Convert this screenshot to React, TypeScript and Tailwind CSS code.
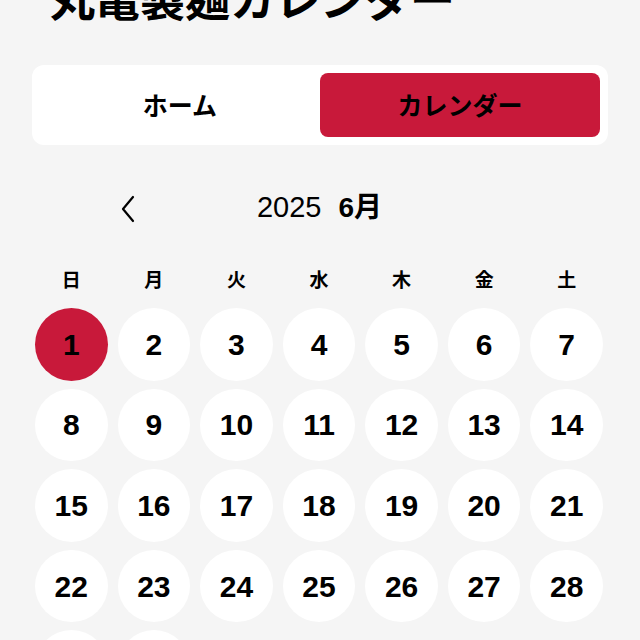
import React from "react";

const weekdays = ["日", "月", "火", "水", "木", "金", "土"];
const days = Array.from({ length: 30 }, (_, i) => i + 1);

export default function App() {
  return (
    <div
      className="h-[640px] overflow-hidden bg-[#f5f5f5] text-black"
      style={{ fontFamily: '"Liberation Sans", "Noto Sans CJK JP", sans-serif' }}
    >
      <h1 className="mt-[-21px] pl-[50px] text-[45px] leading-[45px] font-bold tracking-normal">
        丸亀製麺カレンダー
      </h1>
      <div className="mx-[32px] mt-[41px] flex h-[80px] rounded-[12px] bg-white p-[8px]">
        <button className="flex flex-1 items-center justify-center rounded-[8px] pt-[3px] text-[25px] font-bold">
          ホーム
        </button>
        <button className="flex flex-1 items-center justify-center rounded-[8px] bg-[#c8193a] pt-[3px] text-[25px] font-bold">
          カレンダー
        </button>
      </div>
      <div className="mx-auto mt-[44px] flex h-[42px] w-[400px] items-center justify-between">
        <svg width="18" height="30" viewBox="0 0 18 30" className="ml-[-1px] mt-[-3px]">
          <path d="M14 3 L4 15 L14 27" fill="none" stroke="#000" strokeWidth="2.2" strokeLinecap="round" strokeLinejoin="round" />
        </svg>
        <div className="mt-[-5px] flex items-baseline gap-[17px]">
          <span className="text-[29px]">2025</span>
          <span className="text-[28px] font-bold">6月</span>
        </div>
        <svg width="18" height="30" viewBox="0 0 18 30" className="invisible">
          <path d="M4 3 L14 15 L4 27" fill="none" stroke="#000" strokeWidth="2.2" />
        </svg>
      </div>
      <div className="ml-[35px] mt-[38px] grid w-[568px] grid-cols-7 gap-x-[10px]">
        {weekdays.map((w) => (
          <div key={w} className="flex h-[24px] items-center justify-center text-[19px] font-bold">
            {w}
          </div>
        ))}
      </div>
      <div className="ml-[35px] mt-[15px] grid w-[568px] grid-cols-7 gap-x-[10px] gap-y-[8px]">
        {days.map((d) => (
          <div
            key={d}
            className={`flex aspect-square items-center justify-center rounded-full text-[30px] font-bold ${
              d === 1 ? "bg-[#c8193a]" : "bg-white"
            }`}
          >
            {d}
          </div>
        ))}
      </div>
    </div>
  );
}
